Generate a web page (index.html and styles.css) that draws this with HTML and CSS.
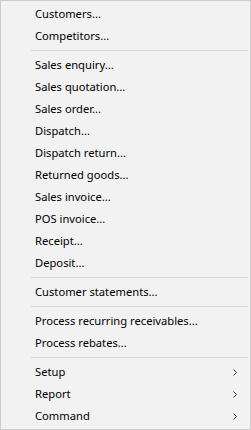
FILE: index.html
```html
<!DOCTYPE html>
<html lang="en">
<head>
    <meta charset="UTF-8">
    <meta name="viewport" content="width=device-width, initial-scale=1.0">
    <title>Sales menu</title>
    <link rel="stylesheet" href="styles.css">
</head>
<body>
    <div class="menu">
        <div class="item">Customers...</div>
        <div class="item">Competitors...</div>
        <div class="sep"></div>
        <div class="item">Sales enquiry...</div>
        <div class="item">Sales quotation...</div>
        <div class="item">Sales order...</div>
        <div class="item">Dispatch...</div>
        <div class="item">Dispatch return...</div>
        <div class="item">Returned goods...</div>
        <div class="item">Sales invoice...</div>
        <div class="item">POS invoice...</div>
        <div class="item">Receipt...</div>
        <div class="item">Deposit...</div>
        <div class="sep"></div>
        <div class="item">Customer statements...</div>
        <div class="sep"></div>
        <div class="item">Process recurring receivables...</div>
        <div class="item">Process rebates...</div>
        <div class="sep"></div>
        <div class="item sub">Setup
            <svg class="arrow" width="4" height="7" viewBox="0 0 4 7"><path d="M0.5 0.5 L3.5 3.5 L0.5 6.5" fill="none" stroke="#333" stroke-width="1"/></svg>
        </div>
        <div class="item sub">Report
            <svg class="arrow" width="4" height="7" viewBox="0 0 4 7"><path d="M0.5 0.5 L3.5 3.5 L0.5 6.5" fill="none" stroke="#333" stroke-width="1"/></svg>
        </div>
        <div class="item sub">Command
            <svg class="arrow" width="4" height="7" viewBox="0 0 4 7"><path d="M0.5 0.5 L3.5 3.5 L0.5 6.5" fill="none" stroke="#333" stroke-width="1"/></svg>
        </div>
    </div>
</body>
</html>
```

FILE: styles.css
```css
body {
    margin: 0;
    padding: 0;
    background: #f0f0f0;
    font-family: "Noto Sans", "Open Sans", sans-serif;
}

.menu {
    width: 251px;
    height: 430px;
    box-sizing: border-box;
    border: 1px solid #cccccc;
    background: #f2f2f2;
    padding: 2px;
    display: flex;
    flex-direction: column;
}

.item {
    height: 22px;
    line-height: 22px;
    padding-left: 32px;
    font-size: 11.2px;
    color: #000;
    display: flex;
    align-items: center;
    white-space: nowrap;
}

.sub {
    justify-content: space-between;
    padding-right: 11px;
}

.arrow {
    display: block;
}

.sep {
    height: 7px;
    margin-left: 28px;
    display: flex;
    align-items: center;
}

.sep::after {
    content: '';
    display: block;
    width: 100%;
    height: 1px;
    background: #d7d7d7;
}
```
